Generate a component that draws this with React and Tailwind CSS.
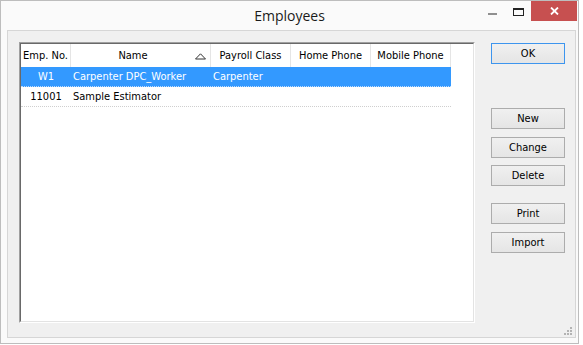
import React from "react";

const F = { fontFamily: "'DejaVu Sans Condensed', 'Liberation Sans', sans-serif" };

function Btn({ label, def, className = "" }) {
  return (
    <div
      className={`w-[74px] h-[21px] pt-[1px] flex items-center justify-center text-[11px] text-black bg-gradient-to-b from-[#f0f0f0] to-[#e5e5e5] border ${
        def ? "border-[#3d95ee]" : "border-[#acacac]"
      } ${className}`}
    >
      {label}
    </div>
  );
}

function HeaderCell({ w, children }) {
  return (
    <div className={`${w} h-full pt-[2px] flex items-center justify-center border-r border-[#e5e5e5]`}>
      {children}
    </div>
  );
}

export default function App() {
  return (
    <div className="w-[583px] h-[345px] bg-white" style={F}>
      <div className="w-[579px] h-[344px] border border-[#bdbdbd] bg-[#fafafa] flex flex-col">
        {/* title bar */}
        <div className="h-[29px] flex items-start relative">
          <div
            className="absolute left-0 right-0 top-[5px] text-center text-[14px] leading-[20px] text-[#1a1a1a]"
            style={{ fontFamily: "'Open Sans', 'Noto Sans', sans-serif" }}
          >
            Employees
          </div>
          <div className="ml-auto flex items-start">
            <div className="w-[26px] h-[20px] flex items-center justify-center">
              <div className="w-[9px] h-[2px] bg-[#8f8f8f] mt-[6px]" />
            </div>
            <div className="w-[26px] h-[20px] flex items-center justify-center">
              <div className="w-[11px] h-[8px] border border-t-2 border-[#222] mt-[2px]" />
            </div>
            <div className="w-[46px] h-[20px] bg-[#c75050] flex items-center justify-center mr-[1px]">
              <svg width="9" height="8" viewBox="0 0 9 8">
                <path d="M1 0.5 L8 7.5 M8 0.5 L1 7.5" stroke="#fff" strokeWidth="1.8" />
              </svg>
            </div>
          </div>
        </div>
        {/* client */}
        <div className="ml-[6px] w-[569px] h-[308px] border border-[#d6d6d6] bg-[#f0f0f0] relative">
          <div className="flex pl-[11px] pt-[11px]">
            {/* list view */}
            <div className="w-[456px] h-[281px] border border-t-[#a0a0a0] border-l-[#a0a0a0] border-b-white border-r-white">
              <div className="w-full h-full border border-t-[#696969] border-l-[#696969] border-b-[#e3e3e3] border-r-[#e3e3e3] bg-white text-[11px] text-black">
                <div className="h-[23px] flex">
                  <HeaderCell w="w-[50px]">Emp. No.</HeaderCell>
                  <div className="w-[140px] h-full flex items-center border-r border-[#e5e5e5]">
                    <span className="flex-1 text-center pt-[2px]">Name</span>
                    <svg width="11" height="7" viewBox="0 0 11 7" className="mr-[4px] mt-[1px]">
                      <polygon points="0.5,6 5.5,0.8 10.5,6" fill="none" stroke="#333" strokeWidth="1" />
                    </svg>
                  </div>
                  <HeaderCell w="w-[80px]">Payroll Class</HeaderCell>
                  <HeaderCell w="w-[80px]">Home Phone</HeaderCell>
                  <HeaderCell w="w-[80px]">Mobile Phone</HeaderCell>
                </div>
                <div className="w-[430px] h-[20px] pt-[2px] flex items-center bg-[#3399ff] text-white border-b border-dotted border-[#bcdcff]">
                  <div className="w-[50px] text-center">W1</div>
                  <div className="w-[140px] pl-[2px]">Carpenter DPC_Worker</div>
                  <div className="w-[80px] pl-[2px]">Carpenter</div>
                </div>
                <div className="w-[430px] h-[20px] pt-[2px] flex items-center border-b border-dotted border-[#cfcfcf]">
                  <div className="w-[50px] text-center">11001</div>
                  <div className="w-[140px] pl-[2px]">Sample Estimator</div>
                </div>
              </div>
            </div>
            {/* buttons */}
            <div className="ml-[16px] pt-[1px] flex flex-col">
              <Btn label="OK" def />
              <Btn label="New" className="mt-[44px]" />
              <Btn label="Change" className="mt-[8px]" />
              <Btn label="Delete" className="mt-[7px]" />
              <Btn label="Print" className="mt-[17px]" />
              <Btn label="Import" className="mt-[8px]" />
            </div>
          </div>
          <svg width="8" height="8" viewBox="0 0 8 8" className="absolute right-[3px] bottom-[2px]">
            <rect x="6" y="0" width="2" height="2" fill="#b3b3b3" />
            <rect x="3" y="3" width="2" height="2" fill="#b3b3b3" />
            <rect x="6" y="3" width="2" height="2" fill="#b3b3b3" />
            <rect x="0" y="6" width="2" height="2" fill="#b3b3b3" />
            <rect x="3" y="6" width="2" height="2" fill="#b3b3b3" />
            <rect x="6" y="6" width="2" height="2" fill="#b3b3b3" />
          </svg>
        </div>
      </div>
    </div>
  );
}
